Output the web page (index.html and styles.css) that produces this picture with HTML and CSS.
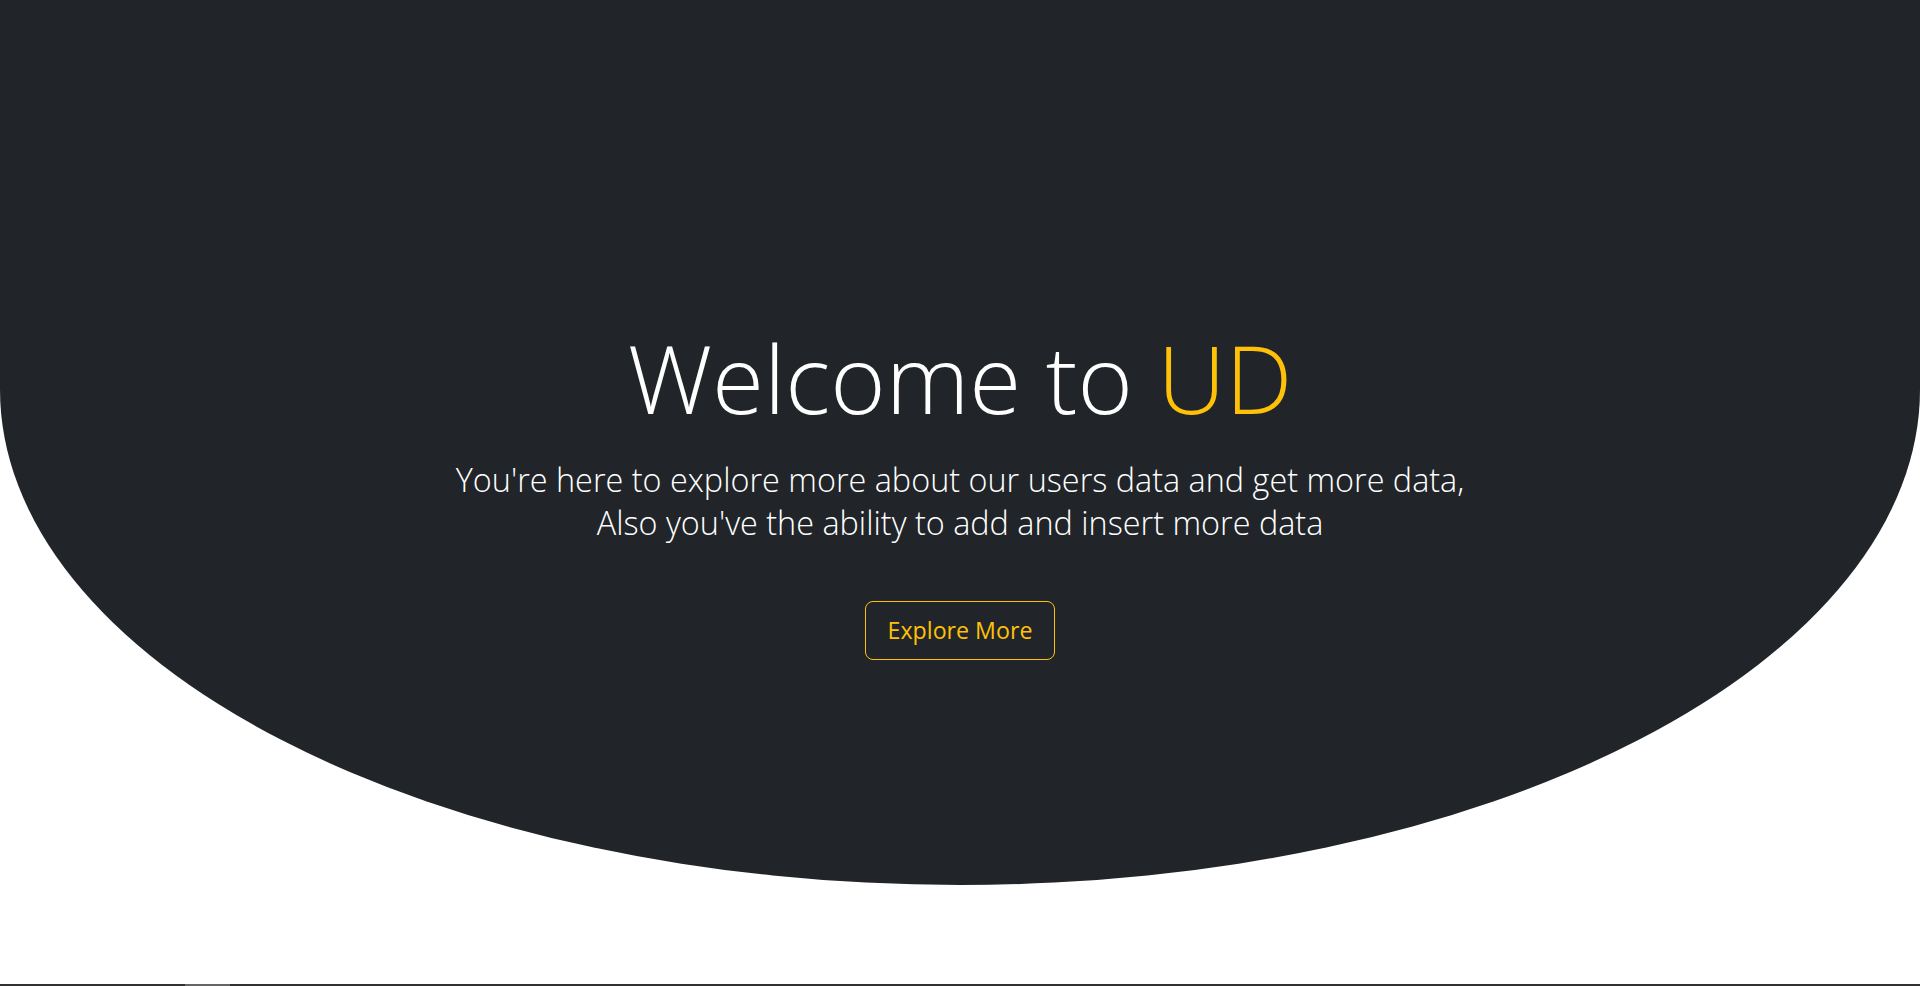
FILE: index.html
```html
<!DOCTYPE html>
<html lang="en">
<head>
<meta charset="utf-8">
<title>UD</title>
<link rel="stylesheet" href="styles.css">
</head>
<body>
<header class="hero">
  <div class="hero-content">
    <h1 class="title">Welcome to <span class="accent">UD</span></h1>
    <p class="lead">You're here to explore more about our users data and get more data,<br>Also you've the ability to add and insert more data</p>
    <a class="btn-outline" href="#">Explore More</a>
  </div>
</header>
<section class="spacer"></section>
<div class="bottom-bar"><span class="bar-thumb"></span></div>
</body>
</html>
```

FILE: styles.css
```css
* { box-sizing: border-box; }
html, body { margin: 0; padding: 0; }
body {
  font-family: "Open Sans", "Noto Sans", sans-serif;
  background: #ffffff;
  overflow: hidden;
}
.hero {
  height: 885px;
  background: #212529;
  border-radius: 0 0 50% 50% / 0 0 56% 56%;
  display: flex;
  justify-content: center;
}
.hero-content {
  padding-top: 320px;
  display: flex;
  flex-direction: column;
  align-items: center;
  text-align: center;
}
.title {
  margin: 0;
  font-weight: 300;
  font-size: 94.6px;
  line-height: 115px;
  color: #ffffff;
}
.accent { color: #ffc107; }
.lead {
  margin: 23px 0 0;
  font-weight: 300;
  font-size: 32.4px;
  line-height: 43px;
  color: #ffffff;
}
.btn-outline {
  margin-top: 57px;
  display: inline-block;
  padding: 11px 22px;
  border: 1px solid #ffc107;
  border-radius: 8px;
  color: #ffc107;
  font-size: 23.2px;
  line-height: 35px;
  text-decoration: none;
}
.spacer { height: 99px; }
.bottom-bar {
  height: 2px;
  background: #313131;
  display: flex;
}
.bar-thumb {
  margin-left: 185px;
  width: 45px;
  background: #656565;
}
```
